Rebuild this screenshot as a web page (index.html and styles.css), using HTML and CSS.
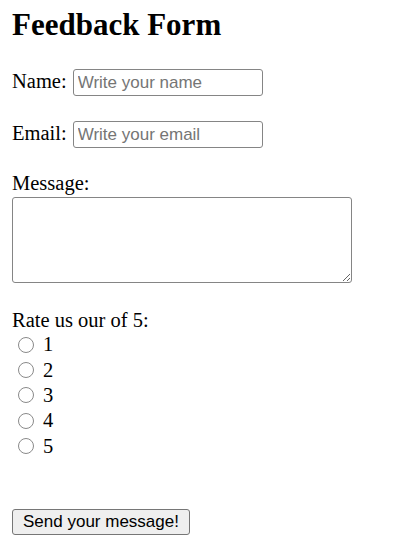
FILE: index.html
```html
<!DOCTYPE html>
<html lang="en">
  <head>
    <meta charset="utf-8" />
    <meta name="viewport" content="width=device-width, initial-scale=1.0" />
    <title>Feedback Form</title>
    <link rel="stylesheet" href="styles.css">
  </head>
  <body>
    <section class="feedback">
      <h1>Feedback Form</h1>
      <form class="form" onsubmit="return false">
        <div class="form__row form__row--name">
          <label for="name">Name:</label>
          <input class="form__input" type="text" id="name" name="name" placeholder="Write your name" />
        </div>
        <div class="form__row form__row--email">
          <label for="email">Email:</label>
          <input class="form__input" type="email" id="email" name="email" placeholder="Write your email" />
        </div>
        <label class="form__label--message" for="message">Message:</label>
        <textarea class="form__textarea" id="message" name="message"></textarea>
        <div class="form__label--rate">Rate us our of 5:</div>
        <div class="form__rating">
          <label class="form__option"><input type="radio" name="rate" value="1" /><span>1</span></label>
          <label class="form__option"><input type="radio" name="rate" value="2" /><span>2</span></label>
          <label class="form__option"><input type="radio" name="rate" value="3" /><span>3</span></label>
          <label class="form__option"><input type="radio" name="rate" value="4" /><span>4</span></label>
          <label class="form__option"><input type="radio" name="rate" value="5" /><span>5</span></label>
        </div>
        <button class="form__button" type="submit">Send your message!</button>
      </form>
    </section>
  </body>
</html>
```

FILE: styles.css
```css
body {
  margin: 0;
  padding: 8px 12px 0 12px;
  font-family: "Liberation Serif", "Times New Roman", serif;
  font-size: 20.5px;
  color: #000;
  background-color: #fff;
}
h1 {
  margin: 0;
  font-size: 31px;
  line-height: 34px;
  font-weight: bold;
}
.form {
  display: flex;
  flex-direction: column;
  align-items: flex-start;
}
.form__row {
  display: flex;
  align-items: baseline;
  gap: 6px;
}
.form__row--name {
  margin-top: 27px;
}
.form__row--email {
  margin-top: 25px;
}
.form__input {
  box-sizing: border-box;
  width: 190px;
  height: 27px;
  margin: 0;
  padding: 0 4px;
  border: 1px solid #858585;
  border-radius: 3px;
  font-family: "Liberation Sans", Arial, sans-serif;
  font-size: 17px;
  color: #000;
}
.form__input::placeholder {
  color: #757575;
}
.form__label--message {
  margin-top: 24px;
  line-height: 23px;
}
.form__textarea {
  display: block;
  box-sizing: border-box;
  width: 340px;
  height: 86px;
  margin: 2px 0 0 0;
  border: 1px solid #858585;
  border-radius: 3px;
  font-family: "Liberation Mono", monospace;
  font-size: 17px;
}
.form__label--rate {
  margin-top: 26px;
  line-height: 23px;
}
.form__rating {
  display: flex;
  flex-direction: column;
}
.form__option {
  display: flex;
  align-items: center;
  height: 25.4px;
}
.form__option input {
  appearance: none;
  box-sizing: border-box;
  width: 16px;
  height: 16px;
  margin: 0 9px 0 6px;
  border: 1px solid #8a8a8a;
  border-radius: 50%;
  background-color: #fff;
}
.form__option input:checked {
  border: 5px solid #0a66d8;
}
.form__option span {
  line-height: 23px;
}
.form__button {
  margin-top: 50px;
  height: 26px;
  padding: 0 10px;
  border: 1px solid #767676;
  border-radius: 3px;
  background-color: #efefef;
  font-family: "Liberation Sans", Arial, sans-serif;
  font-size: 17px;
  color: #000;
}
```
